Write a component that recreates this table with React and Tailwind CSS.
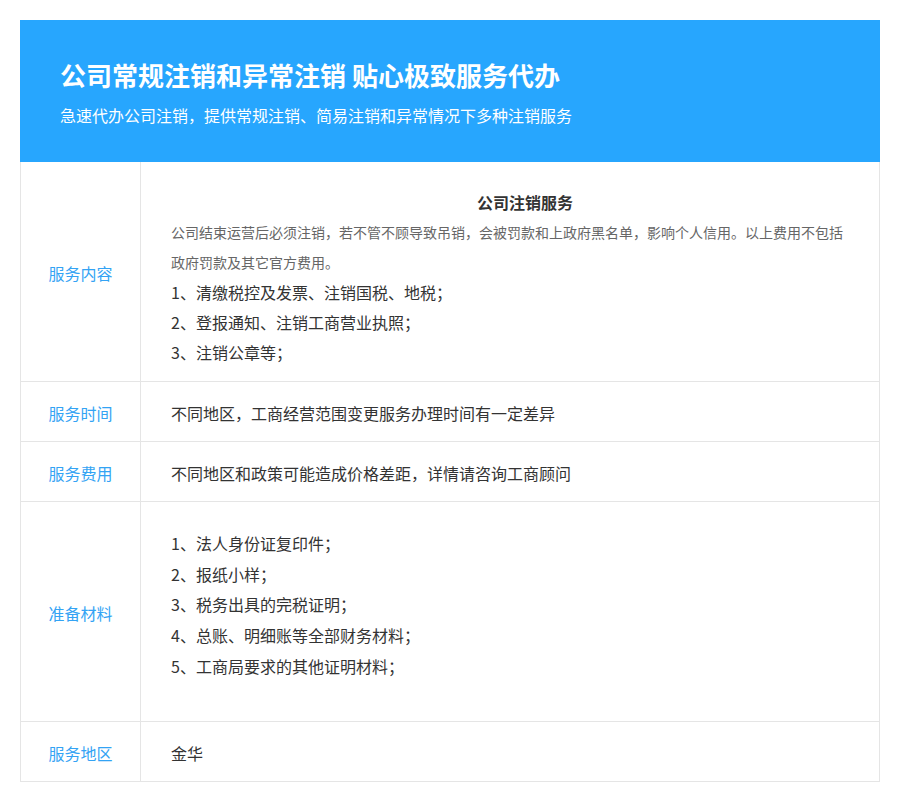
import React from "react";

const FONT = { fontFamily: '"Noto Sans CJK SC", "Noto Sans", sans-serif' };

function Row({ label, height, children, top = false }) {
  return (
    <div className={`grid grid-cols-[120px_1fr] border-b border-[#e5e5e5] ${height}`}>
      <div className="flex items-center justify-center border-r border-[#e5e5e5] pt-[3px] text-[16px] text-[#33a3f4]">
        {label}
      </div>
      <div
        className={`flex pl-[30px] pr-[30px] text-[16px] text-[#333] ${top ? "flex-col" : "items-center pt-[3px]"}`}
      >
        {children}
      </div>
    </div>
  );
}

export default function App() {
  const steps = [
    "1、清缴税控及发票、注销国税、地税；",
    "2、登报通知、注销工商营业执照；",
    "3、注销公章等；",
  ];
  const materials = [
    "1、法人身份证复印件；",
    "2、报纸小样；",
    "3、税务出具的完税证明；",
    "4、总账、明细账等全部财务材料；",
    "5、工商局要求的其他证明材料；",
  ];

  return (
    <div className="min-h-[809px] bg-white pt-[20px]" style={FONT}>
      <div className="ml-[20px] w-[860px]">
        {/* Header */}
        <div className="h-[142px] bg-[#27a6fe] pl-[40px] pt-[37px] text-white">
          <h1 className="text-[26px] font-bold leading-[36px]">
            公司常规注销和异常注销 贴心极致服务代办
          </h1>
          <p className="mt-[10px] text-[16px] leading-[24px]">
            急速代办公司注销，提供常规注销、简易注销和异常情况下多种注销服务
          </p>
        </div>

        {/* Table */}
        <div className="border-x border-[#e5e5e5]">
          <Row label="服务内容" height="h-[220px]" top>
            <div className="pt-[25px]">
              <p className="pl-[30px] text-center font-bold leading-[30px] text-[#333]">
                公司注销服务
              </p>
              <p className="text-[14px] leading-[30px] text-[#666]">
                公司结束运营后必须注销，若不管不顾导致吊销，会被罚款和上政府黑名单，影响个人信用。以上费用不包括政府罚款及其它官方费用。
              </p>
              {steps.map((s) => (
                <p key={s} className="leading-[30px]">
                  {s}
                </p>
              ))}
            </div>
          </Row>
          <Row label="服务时间" height="h-[60px]">
            不同地区，工商经营范围变更服务办理时间有一定差异
          </Row>
          <Row label="服务费用" height="h-[60px]">
            不同地区和政策可能造成价格差距，详情请咨询工商顾问
          </Row>
          <Row label="准备材料" height="h-[220px]" top>
            <div className="pt-[26px]">
              {materials.map((m) => (
                <p key={m} className="leading-[30.7px]">
                  {m}
                </p>
              ))}
            </div>
          </Row>
          <Row label="服务地区" height="h-[60px]">
            金华
          </Row>
        </div>
      </div>
    </div>
  );
}
